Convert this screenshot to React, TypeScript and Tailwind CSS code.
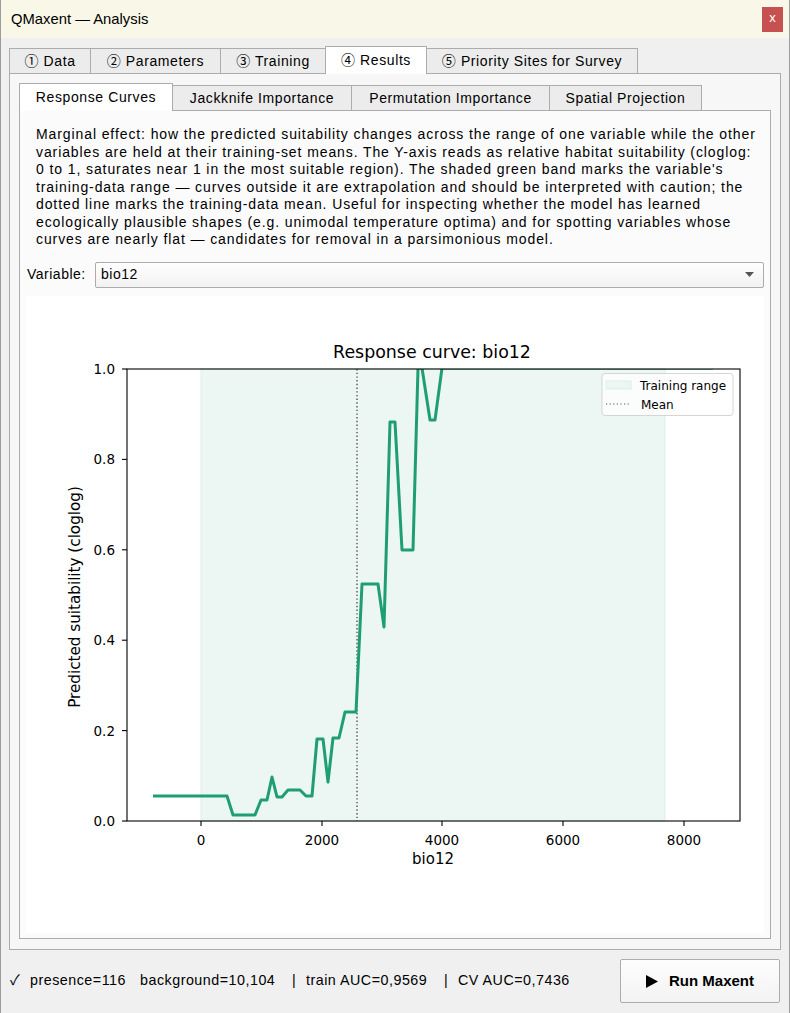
import type { ReactNode } from 'react'

const UI_FONT = { fontFamily: '"Liberation Sans", "Noto Sans CJK KR", sans-serif' }
const PLOT_FONT = '"DejaVu Sans", sans-serif'

const OUTER_TABS = [
  { label: '① Data', width: 'w-[82px]' },
  { label: '② Parameters', width: 'w-[131px]' },
  { label: '③ Training', width: 'w-[106px]' },
  { label: '④ Results', width: 'w-[102px]', active: true },
  { label: '⑤ Priority Sites for Survey', width: 'w-[212px]' },
]

const INNER_TABS = [
  { label: 'Response Curves', width: 'w-[154px]', active: true },
  { label: 'Jackknife Importance', width: 'w-[180px]' },
  { label: 'Permutation Importance', width: 'w-[199px]' },
  { label: 'Spatial Projection', width: 'w-[153px]' },
]

const DESCRIPTION = [
  'Marginal effect: how the predicted suitability changes across the range of one variable while the other',
  'variables are held at their training-set means. The Y-axis reads as relative habitat suitability (cloglog:',
  '0 to 1, saturates near 1 in the most suitable region). The shaded green band marks the variable\'s',
  'training-data range — curves outside it are extrapolation and should be interpreted with caution; the',
  'dotted line marks the training-data mean. Useful for inspecting whether the model has learned',
  'ecologically plausible shapes (e.g. unimodal temperature optima) and for spotting variables whose',
  'curves are nearly flat — candidates for removal in a parsimonious model.',
]

// status line pieces with their column widths
const STATUS = [
  { text: '✓', width: 'w-[20px]' },
  { text: 'presence=116', width: 'w-[110px]' },
  { text: 'background=10,104', width: 'w-[152px]' },
  { text: '|', width: 'w-[14px]' },
  { text: 'train AUC=0,9569', width: 'w-[138px]' },
  { text: '|', width: 'w-[14px]' },
  { text: 'CV AUC=0,7436', width: 'w-[120px]' },
]

// response curve, page pixel coords of the plotted polyline
const CURVE: [number, number][] = [
  [153, 796], [227, 796], [233, 815], [255, 815], [261, 800], [267, 800], [272, 777],
  [277, 797], [282, 797], [288, 790], [300, 790], [306, 796], [312, 796], [317, 739],
  [323, 739], [328, 782], [333, 738], [339, 738], [345, 712], [356, 712], [362, 584],
  [378, 584], [384, 627], [390, 422], [395, 422], [402, 550], [413, 550], [418, 368],
  [422, 368], [430, 420], [435, 420], [442, 368], [713, 368],
]

// axes box
const AX = { left: 127, right: 740, top: 369, bottom: 821 }
const X_TICKS = [
  { v: '0', x: 201 }, { v: '2000', x: 322 }, { v: '4000', x: 442 },
  { v: '6000', x: 563 }, { v: '8000', x: 684 },
]
const Y_TICKS = ['0.0', '0.2', '0.4', '0.6', '0.8', '1.0'].map((v, i) => ({
  v, y: AX.bottom - i * ((AX.bottom - AX.top) / 5),
}))

function Tab({ label, width, active }: { label: string; width: string; active?: boolean }) {
  return (
    <div
      className={[
        'relative -ml-px first:ml-0 flex items-center justify-center border border-b-0 border-[#acacac] text-[14px] tracking-[0.6px] text-black whitespace-nowrap',
        width,
        active ? 'h-[28px] z-10 bg-white -mb-px' : 'h-[25px] bg-[#ececec]',
      ].join(' ')}
    >
      {label}
    </div>
  )
}

function ResponseChart() {
  const pts = CURVE.map(([x, y]) => `${x},${y}`).join(' ')
  return (
    <svg width="736" height="637" viewBox="26 296 736 637" className="block">
      <defs>
        <clipPath id="axes-clip">
          <rect x={AX.left} y={AX.top} width={AX.right - AX.left} height={AX.bottom - AX.top} />
        </clipPath>
      </defs>

      {/* training range band */}
      <rect x={201} y={AX.top} width={464} height={AX.bottom - AX.top} fill="#ecf6f2" stroke="#dcefe8" strokeWidth="1" />

      {/* mean */}
      <line x1={357} y1={AX.top} x2={357} y2={AX.bottom} stroke="#555" strokeWidth="1.4" strokeDasharray="1.4 2.3" />

      <polyline points={pts} fill="none" stroke="#1f9e74" strokeWidth="3" strokeLinejoin="round" clipPath="url(#axes-clip)" />

      {/* spines */}
      <rect x={AX.left} y={AX.top} width={AX.right - AX.left} height={AX.bottom - AX.top} fill="none" stroke="#000" strokeWidth="1.1" />

      {X_TICKS.map(t => (
        <g key={t.v}>
          <line x1={t.x} y1={AX.bottom} x2={t.x} y2={AX.bottom + 5} stroke="#000" strokeWidth="1.1" />
          <text x={t.x} y={AX.bottom + 24} textAnchor="middle" fontSize="13.5" fontFamily={PLOT_FONT} fill="#000">{t.v}</text>
        </g>
      ))}
      {Y_TICKS.map(t => (
        <g key={t.v}>
          <line x1={AX.left - 5} y1={t.y} x2={AX.left} y2={t.y} stroke="#000" strokeWidth="1.1" />
          <text x={AX.left - 12} y={t.y + 5} textAnchor="end" fontSize="13.5" fontFamily={PLOT_FONT} fill="#000">{t.v}</text>
        </g>
      ))}

      <text x={432} y={358} textAnchor="middle" fontSize="17.4" fontFamily={PLOT_FONT} fill="#000">Response curve: bio12</text>
      <text x={433} y={864} textAnchor="middle" fontSize="15" fontFamily={PLOT_FONT} fill="#000">bio12</text>
      <text x={80} y={597} textAnchor="middle" fontSize="15.2" fontFamily={PLOT_FONT} fill="#000" transform="rotate(-90 80 597)">
        Predicted suitability (cloglog)
      </text>

      {/* legend */}
      <rect x={602} y={373.5} width={131} height={42} rx="3" fill="#fff" fillOpacity="0.8" stroke="#d5d5d5" strokeWidth="1" />
      <rect x={606} y={381} width={25} height={8} fill="#ecf6f2" stroke="#dcefe8" strokeWidth="1" />
      <text x={640} y={390} fontSize="12" fontFamily={PLOT_FONT} fill="#000">Training range</text>
      <line x1={606} y1={404} x2={631} y2={404} stroke="#555" strokeWidth="1.2" strokeDasharray="1.2 2.4" />
      <text x={641} y={409} fontSize="12" fontFamily={PLOT_FONT} fill="#000">Mean</text>
    </svg>
  )
}

function Panel({ children }: { children: ReactNode }) {
  return <div className="flex flex-col border border-[#acacac]">{children}</div>
}

export default function App() {
  return (
    <div className="w-[790px] h-[1013px] bg-[#f0f0f0] border-x border-[#9d9d9d] flex flex-col overflow-hidden" style={UI_FONT}>
      {/* title bar */}
      <div className="h-[38px] shrink-0 bg-[#f9f7e8] flex items-center justify-between pl-[10px] pr-[6px]">
        <span className="text-[14.8px] text-black">QMaxent — Analysis</span>
        <div className="w-[21px] h-[25px] bg-[#c75050] flex items-center justify-center text-white text-[13px] pb-[2px]">x</div>
      </div>

      <div className="flex-1 flex flex-col px-[8px] pt-[8px]">
        {/* main tabs */}
        <div className="flex items-end h-[27px] shrink-0">
          {OUTER_TABS.map(t => <Tab key={t.label} {...t} />)}
        </div>

        <div className="h-[877px] shrink-0 border border-[#acacac] bg-[#f7f7f7] p-[9px] flex flex-col">
          <div className="flex items-end h-[27px] shrink-0">
            {INNER_TABS.map(t => <Tab key={t.label} {...t} />)}
          </div>

          <Panel>
            <div className="bg-[#fbfbfb] px-[6px] pt-[15px] pb-[5px] flex flex-col">
              <div className="px-[10px] text-[14px] leading-[17.5px] text-black tracking-[0.9px]">
                {DESCRIPTION.map(line => (
                  <div key={line} className="whitespace-nowrap">{line}</div>
                ))}
              </div>

              <div className="flex items-center mt-[13px] h-[26px]">
                <span className="w-[69px] pl-[1px] text-[14px] tracking-[0.5px] text-black">Variable:</span>
                <div className="flex-1 h-[26px] border border-[#acacac] rounded-[2px] bg-gradient-to-b from-[#fefefe] to-[#f2f2f2] flex items-center justify-between pl-[5px] pr-[9px]">
                  <span className="text-[14px] tracking-[0.5px] text-black">bio12</span>
                  <svg width="9" height="5" viewBox="0 0 9 5"><path d="M0 0H9L4.5 5Z" fill="#555" /></svg>
                </div>
              </div>

              <div className="mt-[8px] bg-white">
                <ResponseChart />
              </div>
            </div>
          </Panel>
        </div>

        {/* status + run */}
        <div className="flex items-center justify-between pl-[1px] pr-[1px] pt-[9px]">
          <div className="flex items-center text-[14.3px] tracking-[0.5px] text-black whitespace-nowrap">
            {STATUS.map((s, i) => (
              <span key={i} className={s.width}>{s.text}</span>
            ))}
          </div>
          <button className="w-[160px] h-[44px] border border-[#adadad] rounded-[2px] bg-gradient-to-b from-[#fdfdfd] to-[#f3f3f3] flex items-center justify-center gap-[11px] text-[15px] text-black">
            <svg width="12" height="13" viewBox="0 0 12 13"><path d="M0 0L12 6.5L0 13Z" fill="#000" /></svg>
            <span className="font-semibold">Run Maxent</span>
          </button>
        </div>
      </div>
    </div>
  )
}
